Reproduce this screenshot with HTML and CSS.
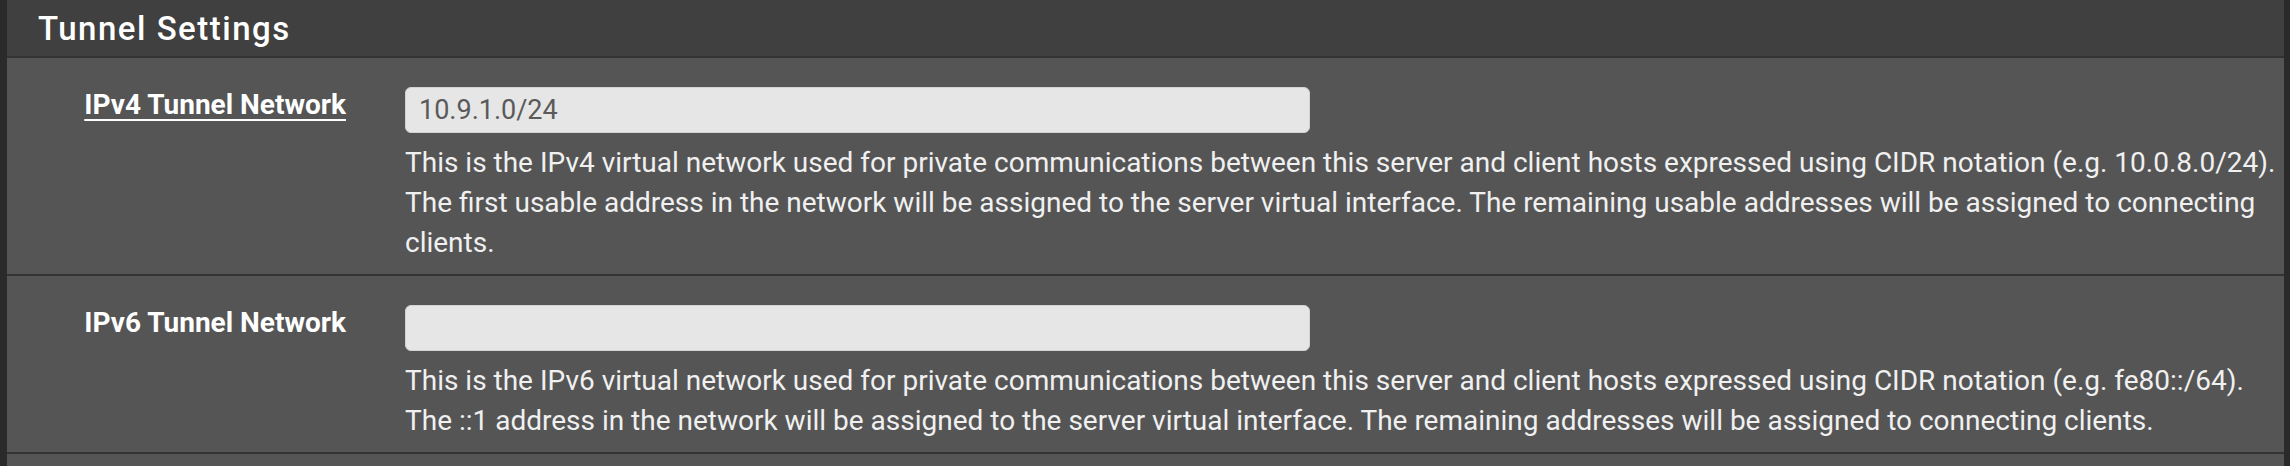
FILE: index.html
```html
<!DOCTYPE html>
<html>
<head>
<meta charset="utf-8">
<link rel="stylesheet" href="styles.css">
</head>
<body>
<div class="panel">
  <div class="panel-heading">
    <h2 class="panel-title">Tunnel Settings</h2>
  </div>
  <div class="panel-body">
    <div class="form-row">
      <div class="label-col"><span class="label linked">IPv4 Tunnel Network</span></div>
      <div class="field-col">
        <div class="input">10.9.1.0/24</div>
        <div class="help">This is the IPv4 virtual network used for private communications between this server and client hosts expressed using CIDR notation (e.g. 10.0.8.0/24). The first usable address in the network will be assigned to the server virtual interface. The remaining usable addresses will be assigned to connecting clients.</div>
      </div>
    </div>
    <div class="form-row">
      <div class="label-col"><span class="label">IPv6 Tunnel Network</span></div>
      <div class="field-col">
        <div class="input"></div>
        <div class="help">This is the IPv6 virtual network used for private communications between this server and client hosts expressed using CIDR notation (e.g. fe80::/64). The ::1 address in the network will be assigned to the server virtual interface. The remaining addresses will be assigned to connecting clients.</div>
      </div>
    </div>
    <div class="form-row empty"></div>
  </div>
</div>
</body>
</html>
```

FILE: styles.css
```css
html, body {
  margin: 0;
  padding: 0;
  background: #2a2a2a;
  font-family: Roboto, "Liberation Sans", sans-serif;
  overflow: hidden;
}

.panel {
  margin: 0 6px 0 7px;
  background: #555555;
  min-height: 466px;
}

.panel-heading {
  height: 56px;
  background: #404040;
  border-top: 1px solid #4a4a4a;
  border-bottom: 2px solid #333333;
  box-sizing: content-box;
  display: flex;
  align-items: center;
  padding-left: 31px;
  margin-top: -1px;
}

.panel-title {
  margin: 0;
  font-size: 33px;
  font-weight: 500;
  letter-spacing: 1.5px;
  color: #ffffff;
}

.form-row {
  display: grid;
  grid-template-columns: 398px 1fr;
  padding: 29px 0 11px;
  border-bottom: 2px solid #333333;
}

.form-row.empty {
  border-bottom: none;
  padding: 0;
  height: 20px;
}

.label-col {
  text-align: right;
  padding-right: 59px;
  line-height: 36px;
}

.label {
  font-size: 28px;
  font-weight: 700;
  color: #ffffff;
}

.label.linked {
  text-decoration: underline;
  text-decoration-thickness: 2px;
  text-underline-offset: 5px;
}

.field-col {
  padding-right: 6px;
}

.input {
  width: 905px;
  height: 46px;
  box-sizing: border-box;
  background: #e6e6e6;
  border: 1px solid #d2d2d2;
  border-radius: 6px;
  padding-left: 13px;
  font-size: 27px;
  line-height: 44px;
  color: #5a5a5a;
}

.help {
  margin-top: 10px;
  font-size: 28px;
  line-height: 40px;
  color: #f0f0f0;
}
```
